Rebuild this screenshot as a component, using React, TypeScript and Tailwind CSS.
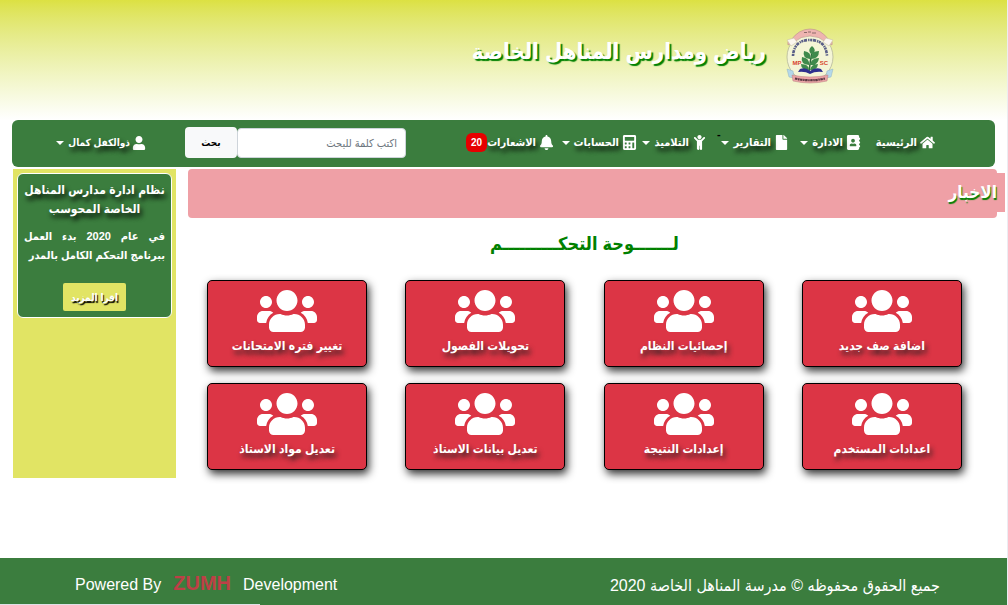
import React from "react";
import {
  FaAddressBook,
  FaBell,
  FaCalculator,
  FaChild,
  FaFile,
  FaHome,
  FaUser,
  FaUsers,
} from "react-icons/fa";
import type { IconType } from "react-icons";

type NavItem = {
  label: string;
  icon: IconType;
  width: string;
  caret?: boolean;
  badge?: string;
  note?: string;
};

const navItems: NavItem[] = [
  { label: "الرئيسية", icon: FaHome, width: "w-[74px]" },
  { label: "الادارة", icon: FaAddressBook, width: "w-[72px]", caret: true },
  { label: "التقارير", icon: FaFile, width: "w-[82px]", caret: true, note: "-" },
  { label: "التلاميذ", icon: FaChild, width: "w-[70px]", caret: true },
  { label: "الحسابات", icon: FaCalculator, width: "w-[83px]", caret: true },
  { label: "الاشعارات", icon: FaBell, width: "w-[86px]", badge: "20" },
];

const cards = [
  "اضافة صف جديد",
  "إحصائيات النظام",
  "تحويلات الفصول",
  "تغيير فتره الامتحانات",
  "اعدادات المستخدم",
  "إعدادات النتيجة",
  "تعديل بيانات الاستاذ",
  "تعديل مواد الاستاذ",
];

function Caret() {
  return (
    <span className="ms-1 inline-block border-x-4 border-t-4 border-x-transparent border-t-white" />
  );
}

function Logo() {
  return (
    <svg viewBox="0 0 48 56" className="h-14 w-12" role="img" aria-label="شعار المدارس">
      <ellipse cx="24" cy="29" rx="23" ry="24" fill="#f4f5d6" stroke="#b5b79a" strokeWidth="0.8" />
      <path d="M2 17 Q1 12 5 12 Q13 1 24 1 Q35 1 43 12 Q47 12 46 17 L40 14 Q33 8 24 8 Q15 8 8 14 Z" fill="#eeb4b0" stroke="#b9908b" strokeWidth="0.6" />
      <path d="M1 12 L8 10 L11 14 L5 18 Z M47 12 L40 10 L37 14 L43 18 Z" fill="#fbf7ee" stroke="#c5b8a0" strokeWidth="0.5" />
      <path d="M18 4.500 h3 m1 -.5 h3 m1 1 h4" stroke="#8c6a68" strokeWidth="1.200" />
      <path d="M7 28 Q8 12 24 12 Q40 12 41 28" fill="none" stroke="#5a5f88" strokeWidth="2.600" strokeDasharray="2 0.7 3.2 1 1.3 0.6" />
      <path d="M23 44 Q24 34 26 24" stroke="#2d6b3c" strokeWidth="1.500" fill="none" />
      <path d="M25 26 Q21 22 26 18 Q31 22 27 26 Z M24 31 Q16 30 18 23 Q26 24 24 31 Z M25 31 Q25 23 33 23 Q33 31 25 31 Z M23 37 Q14 36 16 29 Q24 30 23 37 Z M24 37 Q25 30 33 30 Q32 38 24 37 Z M23 42 Q15 42 15 36 Q23 36 23 42 Z M24 42 Q25 36 32 36 Q31 43 24 42 Z" fill="#3f8a4c" />
      <path d="M14 41 Q20 39 24 43 Q29 39 35 41 L37 44 Q29 43 24 46 Q19 43 12 44 Z" fill="#2d2f8e" />
      <path d="M1 41 L7 43 L8 50 L3 49 Z M47 41 L41 43 L40 50 L45 49 Z" fill="#b4d8ea" stroke="#8fb2c4" strokeWidth="0.5" />
      <path d="M6 47 Q24 51 42 47 L41 53 Q24 57 7 53 Z" fill="#eaa3a5" stroke="#b98184" strokeWidth="0.5" />
      <path d="M9 50.500 Q24 54 39 50.500" stroke="#5a3842" strokeWidth="2.200" strokeDasharray="2.500 0.6 1.500 0.5" fill="none" />
      <text x="11" y="37" fontSize="6" fontWeight="bold" fill="#d6452c" textAnchor="middle">MP</text>
      <text x="38" y="37" fontSize="6" fontWeight="bold" fill="#d6452c" textAnchor="middle">SC</text>
    </svg>
  );
}

export default function App() {
  return (
    <div
      dir="rtl"
      className="flex min-h-screen flex-col bg-white font-['Liberation_Sans','DejaVu_Sans_Condensed','DejaVu_Sans',sans-serif] [border-right:1px_solid_#ececf2]"
    >
      <header className="flex h-[120px] items-start gap-5 bg-linear-to-b from-[#dce142] to-white pt-7 pr-[173px]">
        <Logo />
        <h1 className="pt-1 text-[22px] leading-10 font-bold whitespace-nowrap text-white [text-shadow:2px_2px_1px_green]">
          رياض ومدارس المناهل الخاصة
        </h1>
      </header>

      <nav className="mr-3 ml-3 flex h-[47px] items-center rounded-md bg-[#3b7d3e] pr-[60px] pb-0.5 pl-[45px] text-[11px] font-bold text-white">
        <ul className="flex items-center">
          {navItems.map(({ label, icon: Icon, width, caret, badge, note }) => (
            <li key={label} className={`relative shrink-0 ${width}`}>
              <a
                href="#"
                className="flex items-center whitespace-nowrap [text-shadow:2px_4px_5px_black]"
              >
                <Icon className="me-[3px] size-[15px] shrink-0" />
                {label}
                {caret && <Caret />}
                {badge && (
                  <span className="rounded-md bg-[#e60000] px-[5px] text-[10px] leading-[19px] [text-shadow:none]">
                    {badge}
                  </span>
                )}
              </a>
              {note && <span className="absolute -top-2 left-2.5 text-black">{note}</span>}
            </li>
          ))}
        </ul>
        <form className="mr-auto flex items-center" onSubmit={(e) => e.preventDefault()}>
          <input
            type="search"
            aria-label="بحث"
            placeholder="اكتب كلمة للبحث"
            className="h-[30px] w-[169px] rounded-sm border border-[#ced4da] bg-white px-2 text-[11px] font-normal text-black placeholder:text-[#6c757d]"
          />
          <button type="submit" className="h-[31px] w-[52px] rounded-sm bg-[#f8f9fa] text-[10px] text-black">
            بحث
          </button>
        </form>
        <a
          href="#"
          className="mr-[39px] flex w-[89px] items-center whitespace-nowrap [text-shadow:2px_4px_5px_black]"
        >
          <FaUser className="me-0.5 size-[14px] shrink-0" />
          <span className="text-[10px]">ذوالكفل كمال</span>
          <Caret />
        </a>
      </nav>

      <div className="mt-0.5 flex grow items-start gap-3 pr-2.5 pl-[13px]">
        <main className="min-w-0 grow">
          <div className="flex h-[49px] items-start rounded-sm bg-[#efa0a6] pt-1">
            <div className="-mr-2 flex h-[39px] items-center bg-[#efa0a6] pr-2">
              <h2 className="text-[17px] font-bold text-white [text-shadow:1px_2px_1px_green]">الاخبار</h2>
            </div>
          </div>
          <div className="pr-4">
            <h2 className="mt-2 text-center text-lg leading-9 font-bold text-[green]">
              لـــــــوحة التحكــــــــــم
            </h2>
            <div className="mt-[18px] grid grid-cols-4 gap-y-4">
              {cards.map((label) => (
                <a
                  key={label}
                  href="#"
                  className="mx-auto flex h-[87px] w-40 flex-col items-center rounded-[5px] border border-black bg-[#dc3545] pt-1.5 text-white shadow-[2px_4px_8px_#333]"
                >
                  <FaUsers className="h-12 w-[60px]" />
                  <span className="text-xs leading-[22px] font-bold whitespace-nowrap [text-shadow:2px_4px_5px_#222]">
                    {label}
                  </span>
                </a>
              ))}
            </div>
          </div>
        </main>

        <aside className="h-[309px] w-[163px] shrink-0 bg-[#e1e464] p-1">
          <section className="flex h-[145px] flex-col items-center rounded-md border border-white bg-[#3b7d3e] px-1.5 pt-[7px] font-bold text-white">
            <h3 className="text-center text-xs leading-[19px] whitespace-nowrap [text-shadow:2px_4px_5px_black]">
              نظام ادارة مدارس المناهل
              <br />
              الخاصة المحوسب
            </h3>
            <p className="mt-2 self-stretch text-justify text-[11px] leading-[19px]">
              في عام 2020 بدء العمل ببرنامج التحكم الكامل بالمدر
            </p>
            <button
              type="button"
              className="mt-[18px] h-7 w-[63px] shrink-0 rounded-xs bg-[#e1e464] text-[10px] whitespace-nowrap [text-shadow:1px_2px_1px_black]"
            >
              اقرا المزيد
            </button>
          </section>
        </aside>
      </div>

      <footer className="relative flex h-[47px] items-center justify-between bg-[#3b7d3e] pt-1 pr-[67px] pl-[75px] text-base text-white">
        <p className="pt-1">جميع الحقوق محفوظه © مدرسة المناهل الخاصة 2020</p>
        <p dir="ltr" className="flex items-baseline gap-3">
          Powered By <strong className="text-xl leading-6 text-[#bd4046]">ZUMH</strong> Development
        </p>
        <span className="absolute bottom-0 left-0 h-px w-[260px] bg-[#dee1e6]" />
      </footer>
    </div>
  );
}
